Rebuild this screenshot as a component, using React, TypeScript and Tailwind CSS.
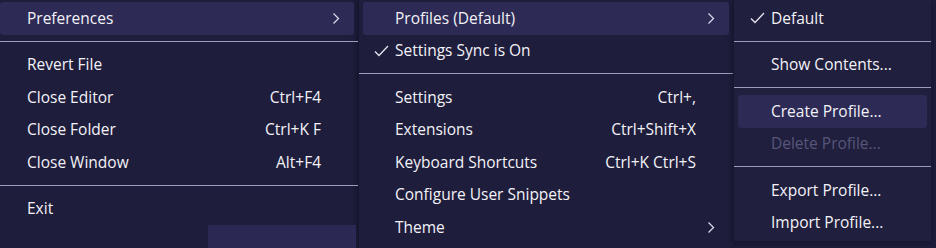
import React from "react";

type Item = {
  label?: string;
  keys?: string;
  sub?: boolean;
  checked?: boolean;
  active?: boolean;
  disabled?: boolean;
  sep?: boolean;
};

const Chevron = () => (
  <svg width="8" height="13" viewBox="0 0 8 13" className="text-[#d8d7ea]">
    <polyline points="1.5,1.5 6.5,6.5 1.5,11.5" fill="none" stroke="currentColor" strokeWidth="1.3" />
  </svg>
);

const Check = () => (
  <svg width="15" height="12" viewBox="0 0 15 12" className="text-[#e6e5f2]">
    <polyline points="1,6.5 5,10.5 14,1" fill="none" stroke="currentColor" strokeWidth="1.3" />
  </svg>
);

const Row = ({ item, pad, keyRight, checkLeft }: { item: Item; pad: string; keyRight: string; checkLeft: string }) => {
  if (item.sep) {
    return (
      <div className="pt-[6px] pb-[7px]">
        <div className="h-px bg-[#9d9bbd]" />
      </div>
    );
  }
  return (
    <div
      className={`relative flex h-[32.5px] items-center rounded-[3px] mx-1 ${item.active ? "bg-[#2d2a55]" : ""} ${
        item.disabled ? "text-[#57557a]" : "text-[#f3f2f8]"
      }`}
    >
      {item.checked && <span className={`absolute ${checkLeft} top-[10px]`}><Check /></span>}
      <span className={pad}>{item.label}</span>
      <span className="flex-1" />
      {item.keys && <span className={keyRight}>{item.keys}</span>}
      {item.sub && <span className="absolute right-[14px] top-[10px]"><Chevron /></span>}
    </div>
  );
};

const menu1: Item[] = [
  { label: "Preferences", sub: true, active: true },
  { sep: true },
  { label: "Revert File" },
  { label: "Close Editor", keys: "Ctrl+F4" },
  { label: "Close Folder", keys: "Ctrl+K F" },
  { label: "Close Window", keys: "Alt+F4" },
  { sep: true },
  { label: "Exit" },
];

const menu2: Item[] = [
  { label: "Profiles (Default)", sub: true, active: true },
  { label: "Settings Sync is On", checked: true },
  { sep: true },
  { label: "Settings", keys: "Ctrl+," },
  { label: "Extensions", keys: "Ctrl+Shift+X" },
  { label: "Keyboard Shortcuts", keys: "Ctrl+K Ctrl+S" },
  { label: "Configure User Snippets" },
  { label: "Theme", sub: true },
];

const menu3: Item[] = [
  { label: "Default", checked: true },
  { sep: true },
  { label: "Show Contents..." },
  { sep: true },
  { label: "Create Profile...", active: true },
  { label: "Delete Profile...", disabled: true },
  { sep: true },
  { label: "Export Profile..." },
  { label: "Import Profile..." },
];

export default function App() {
  return (
    <div
      className="flex h-[248px] w-[936px] overflow-hidden bg-[#1e1d3b] text-[15.5px]"
      style={{ fontFamily: '"Segoe UI", "Open Sans", sans-serif' }}
    >
      <div className="relative -ml-1 flex w-[362px] shrink-0 flex-col pt-[2px]">
        {menu1.map((it, i) => (
          <Row key={i} item={it} pad="pl-[27px]" keyRight="pr-[33px]" checkLeft="left-[8px]" />
        ))}
        <div className="ml-[212px] mr-[2px] flex-1 bg-[#2b2953]" />
      </div>
      <div className="flex w-[375px] shrink-0 flex-col border-l border-[#171630] pt-[2px] shadow-[-2px_0_4px_rgba(0,0,0,0.25)]">
        {menu2.map((it, i) => (
          <Row key={i} item={it} pad="pl-[32px]" keyRight="pr-[33px]" checkLeft="left-[11px]" />
        ))}
      </div>
      <div className="flex w-[198px] shrink-0 flex-col self-start border-l border-[#171630] bg-[#201f3d] pt-[2px] pb-[2px] shadow-[0_2px_6px_rgba(0,0,0,0.35)]">
        {menu3.map((it, i) => (
          <Row key={i} item={it} pad="pl-[33px]" keyRight="pr-[20px]" checkLeft="left-[12px]" />
        ))}
      </div>
    </div>
  );
}
